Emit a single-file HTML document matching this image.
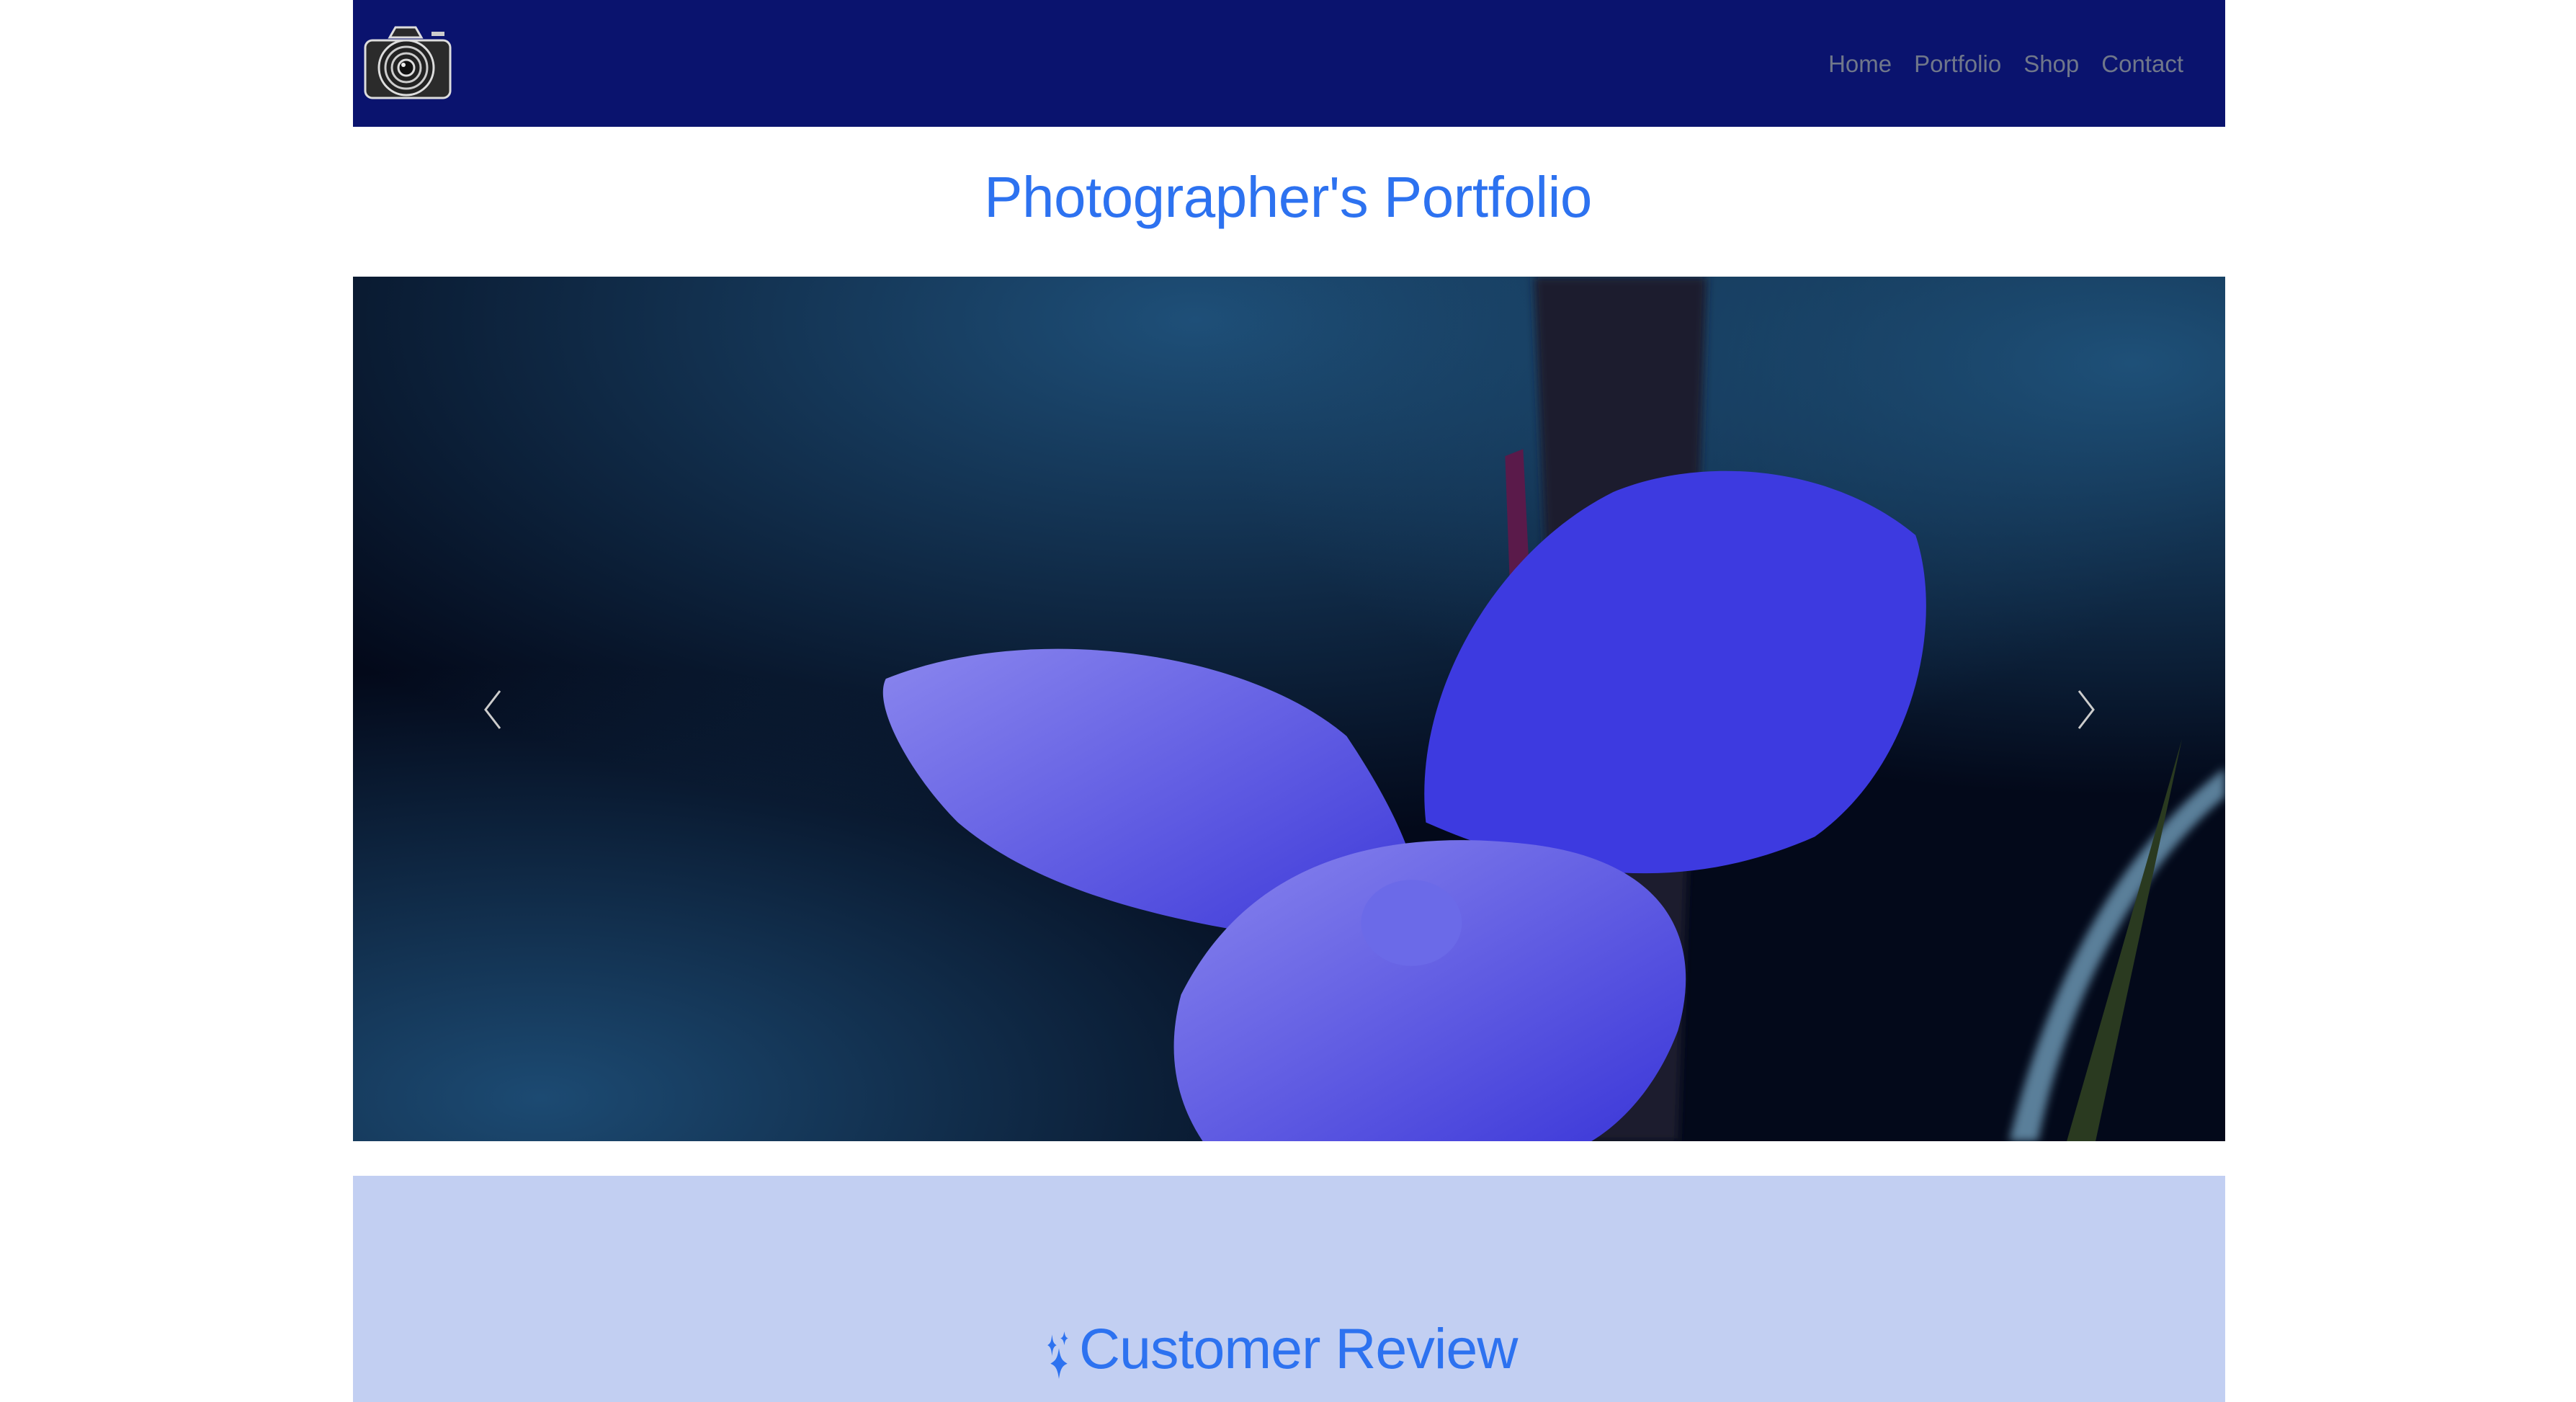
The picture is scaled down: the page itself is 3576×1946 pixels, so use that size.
<!DOCTYPE html>
<html><head><meta charset="utf-8"><style>
*{margin:0;padding:0;box-sizing:border-box}
html,body{width:3576px;height:1946px;overflow:hidden;background:#fff;font-family:"Liberation Sans",sans-serif}
.wrap{position:absolute;left:490px;width:2599px}
nav{position:absolute;right:58px;top:70px;font-size:33px;color:#70778a}
nav span{margin-left:31px}
h1{position:absolute;top:228px;left:0;width:3576px;text-align:center;color:#2d72f0;font-weight:normal;font-size:80px;letter-spacing:-0.5px}
.car{top:384px;height:1200px;overflow:hidden;background:#040b1c}
.rev{top:1632px;height:314px;background:#c2cff2}
.rt{position:absolute;top:1826px;left:1498px;font-size:79px;color:#2d72f0;letter-spacing:-1px}
</style></head><body>
<div class="wrap" style="top:0;height:176px;background:#0a136e">
<svg style="position:absolute;left:14px;top:36px" width="124" height="102" viewBox="0 0 124 102">
<path d="M45 2h28l8 14H37z" fill="#2a2a2a" stroke="#ddd" stroke-width="3"/>
<rect x="3" y="20" width="118" height="80" rx="10" fill="#2b2b2b" stroke="#ddd" stroke-width="3"/>
<circle cx="60" cy="58" r="38" fill="#222" stroke="#ddd" stroke-width="3"/>
<circle cx="60" cy="58" r="29" fill="none" stroke="#ccc" stroke-width="3"/>
<circle cx="60" cy="58" r="20" fill="none" stroke="#ccc" stroke-width="3"/>
<circle cx="60" cy="58" r="11" fill="#111" stroke="#ddd" stroke-width="3"/>
<circle cx="56" cy="54" r="3" fill="#eee"/>
<rect x="95" y="8" width="18" height="6" fill="#ccc"/>
</svg>
<nav><span>Home</span><span>Portfolio</span><span>Shop</span><span>Contact</span></nav>
</div>
<h1>Photographer's Portfolio</h1>
<div class="wrap car">
<svg width="2599" height="1200" viewBox="0 0 2600 1204" preserveAspectRatio="none">
<defs>
<radialGradient id="g1" cx="0.45" cy="0.05" r="0.6"><stop offset="0" stop-color="#1e4f78"/><stop offset="1" stop-color="#1e4f78" stop-opacity="0"/></radialGradient>
<radialGradient id="g2" cx="0.95" cy="0.1" r="0.5"><stop offset="0" stop-color="#1e5078"/><stop offset="1" stop-color="#1e5078" stop-opacity="0"/></radialGradient>
<radialGradient id="g3" cx="0.1" cy="0.95" r="0.5"><stop offset="0" stop-color="#1c4a72"/><stop offset="1" stop-color="#1c4a72" stop-opacity="0"/></radialGradient>
<linearGradient id="p" x1="0" y1="0" x2="1" y2="1"><stop offset="0" stop-color="#8a86ee"/><stop offset="1" stop-color="#3a36d8"/></linearGradient>
<filter id="b"><feGaussianBlur stdDeviation="6"/></filter>
</defs>
<rect width="2600" height="1204" fill="#03091a"/>
<rect width="2600" height="1204" fill="url(#g1)"/>
<rect width="2600" height="1204" fill="url(#g2)"/>
<rect width="2600" height="1204" fill="url(#g3)"/>
<path d="M1640 0h240l-40 1204h-150z" fill="#1a1a2e" filter="url(#b)"/>
<path d="M1600 250l25 -10 20 400 -30 20z" fill="#5a1a4a"/>
<path d="M2300 1204c60-250 170-420 300-520v40c-120 100-220 280-260 480z" fill="#5a7f9a" filter="url(#b)"/>
<path d="M2380 1204l160-560-120 560z" fill="#2a3a20"/>
<path d="M740 560c200-80 500-40 640 80 80 120 120 220 100 300-250-20-500-60-640-180-60-60-120-160-100-200z" fill="url(#p)"/>
<path d="M1490 760c-20-180 100-380 260-460 120-50 300-40 420 60 40 120 0 320-140 420-180 80-360 60-540-20z" fill="#3d3ae0"/>
<path d="M1150 1000c100-200 300-230 480-210 180 20 250 120 210 260-30 80-80 130-120 154H1180c-40-60-50-130-30-204z" fill="url(#p)"/>
<ellipse cx="1470" cy="900" rx="70" ry="60" fill="#6b6ae8"/>
</svg>
<svg style="position:absolute;left:180px;top:573px" width="28" height="56"><path d="M24 2L4 28l20 26" fill="none" stroke="#ccc" stroke-width="3"/></svg>
<svg style="position:absolute;left:2392px;top:573px" width="28" height="56"><path d="M4 2l20 26L4 54" fill="none" stroke="#ccc" stroke-width="3"/></svg>
</div>
<div class="wrap rev"></div>
<svg style="position:absolute;left:1450px;top:1848px" width="40" height="66" viewBox="0 0 36 62">
<path d="M9 4c1 9 2 12 6 14-4 2-5 5-6 14-1-9-2-12-6-14 4-2 5-5 6-14z" fill="#2d72f0"/>
<path d="M25 0c1 6 2 8 5 9-3 1-4 3-5 9-1-6-2-8-5-9 3-1 4-3 5-9z" fill="#2d72f0"/>
<path d="M18 22c2 13 4 16 11 20-7 3-9 7-11 20-2-13-4-17-11-20 7-4 9-7 11-20z" fill="#2d72f0"/>
</svg>
<div class="rt">Customer Review</div>
</body></html>
